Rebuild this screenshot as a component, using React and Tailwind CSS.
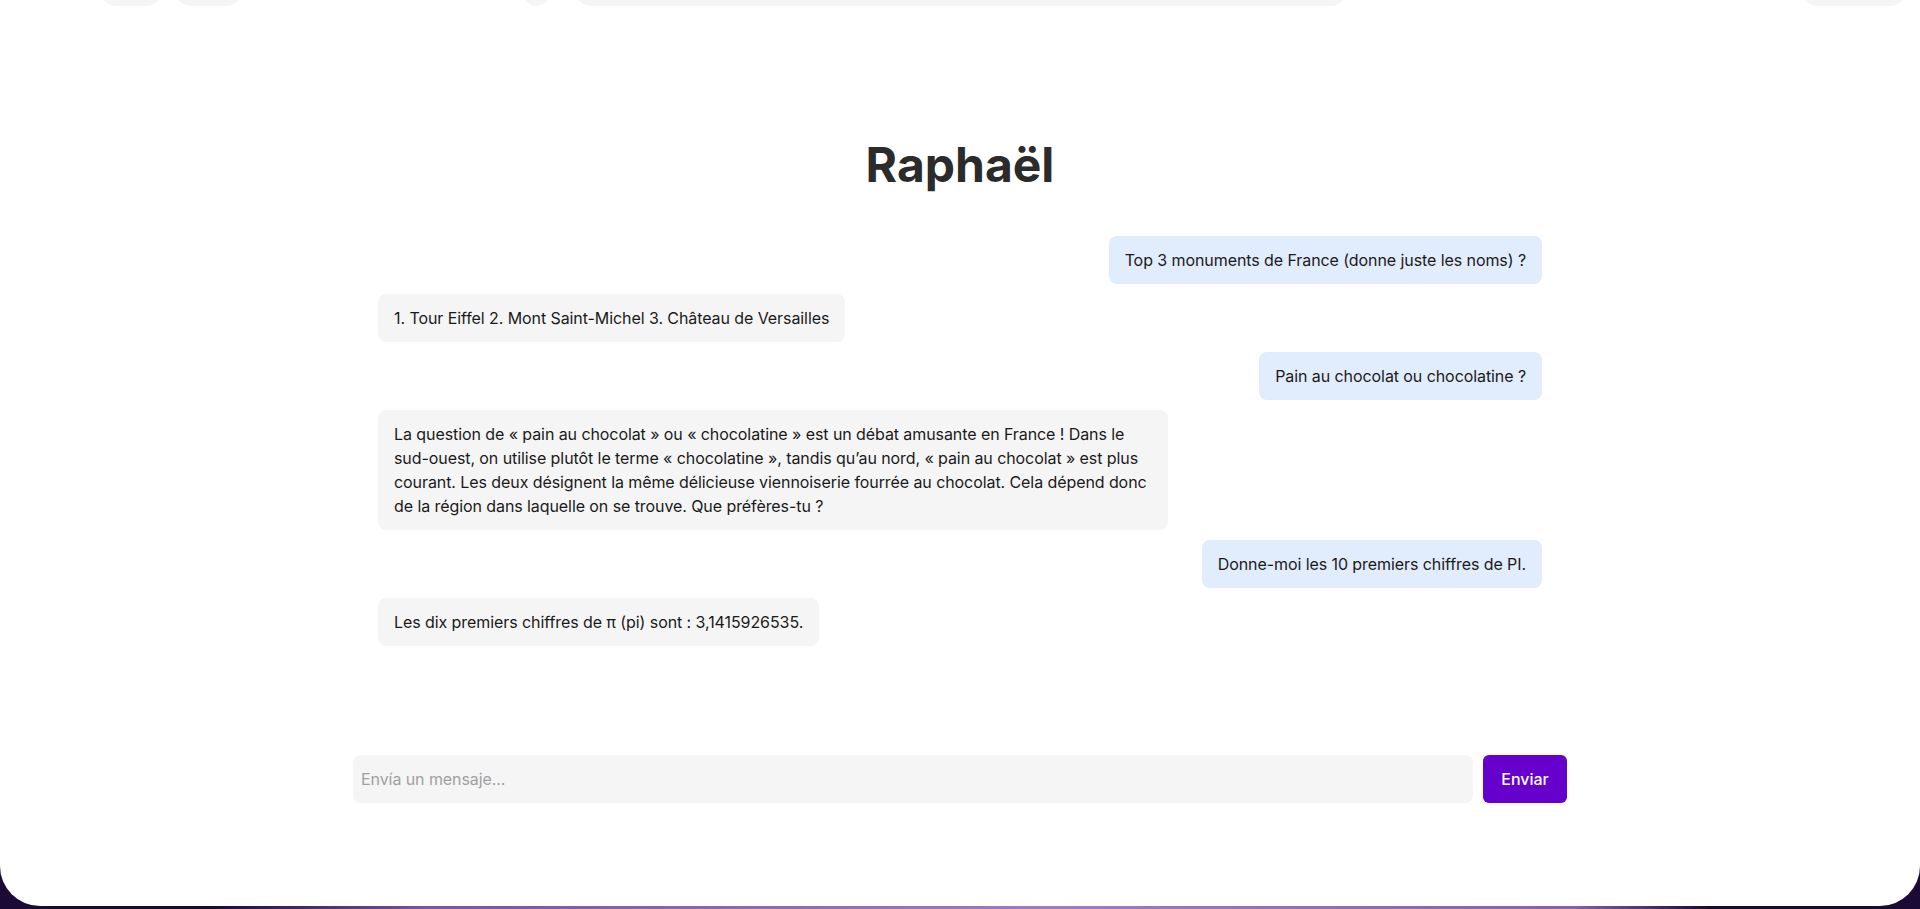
import { useState } from "react";

const MESSAGES = [
  { role: "user", text: "Top 3 monuments de France (donne juste les noms) ?" },
  { role: "bot", text: "1. Tour Eiffel 2. Mont Saint-Michel 3. Château de Versailles" },
  { role: "user", text: "Pain au chocolat ou chocolatine ?" },
  {
    role: "bot",
    text: "La question de « pain au chocolat » ou « chocolatine » est un débat amusante en France ! Dans le sud-ouest, on utilise plutôt le terme « chocolatine », tandis qu’au nord, « pain au chocolat » est plus courant. Les deux désignent la même délicieuse viennoiserie fourrée au chocolat. Cela dépend donc de la région dans laquelle on se trouve. Que préfères-tu ?",
  },
  { role: "user", text: "Donne-moi les 10 premiers chiffres de PI." },
  { role: "bot", text: "Les dix premiers chiffres de π (pi) sont : 3,1415926535." },
];

export default function App() {
  const [draft, setDraft] = useState("");

  return (
    <div className="h-[909px] overflow-hidden bg-[linear-gradient(90deg,#1b0a36_0%,#1b0a36_11%,#7d539b_22%,#a27bbd_55%,#8a5fa6_82%,#1b0a36_89%,#1b0a36_100%)] font-['Inter','Noto_Sans',sans-serif]">
      <div className="h-[906px] bg-white rounded-b-[40px] flex flex-col">
        {/* header, scrolled mostly out of view */}
        <div className="h-[6px] overflow-hidden flex items-end">
          <div className="ml-[100px] w-[62px] h-10 rounded-2xl bg-[#f5f5f5]"></div>
          <div className="ml-[13px] w-[67px] h-10 rounded-2xl bg-[#f5f5f5]"></div>
          <div className="ml-[281px] w-[27px] h-[27px] rounded-full bg-[#f5f5f5]"></div>
          <div className="ml-[25px] w-[772px] h-10 rounded-2xl bg-[#f5f5f5]"></div>
          <div className="ml-[455px] w-[104px] h-10 rounded-2xl bg-[#f5f5f5]"></div>
        </div>

        <h1 className="mt-[135px] text-center text-5xl leading-[48px] font-bold text-[#2b2b2b]">
          Raphaël
        </h1>

        <div className="mt-[47px] w-[1214px] mx-auto px-[25px] flex flex-col gap-2.5">
          {MESSAGES.map((m, i) => (
            <div
              key={i}
              className={`flex ${m.role === "user" ? "justify-end" : "justify-start"}`}
            >
              <div
                className={`max-w-[790px] px-4 py-3 rounded-lg text-base leading-6 tracking-[-0.08px] text-[#1a1a1a] ${
                  m.role === "user" ? "bg-[#e1ecfd]" : "bg-[#f5f5f5]"
                }`}
              >
                {m.text}
              </div>
            </div>
          ))}
        </div>

        <div className="mt-[109px] w-[1214px] mx-auto flex gap-2.5">
          <input
            value={draft}
            onChange={(e) => setDraft(e.target.value)}
            placeholder="Envía un mensaje..."
            className="flex-1 h-12 px-2 rounded-lg bg-[#f5f5f5] text-base tracking-[-0.08px] text-[#1a1a1a] placeholder:text-[#a0a0a0] outline-none"
          />
          <button
            type="button"
            className="w-[84px] h-12 rounded-md bg-[#6600cc] text-white text-base font-medium"
          >
            Enviar
          </button>
        </div>
      </div>
    </div>
  );
}
